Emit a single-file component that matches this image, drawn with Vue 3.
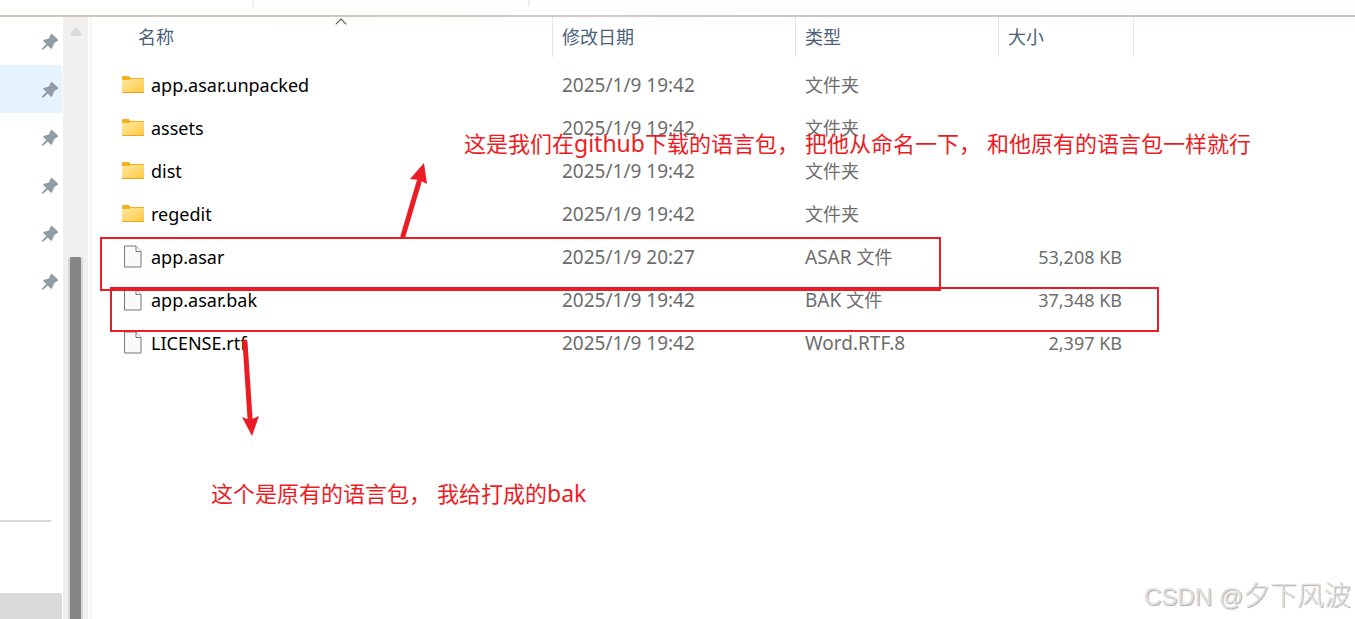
<script setup>
const pins = [
  { id: 1, active: false },
  { id: 2, active: true },
  { id: 3, active: false },
  { id: 4, active: false },
  { id: 5, active: false },
  { id: 6, active: false },
]

const files = [
  { name: 'app.asar.unpacked', date: '2025/1/9 19:42', kind: '', type: '文件夹', size: '', folder: true },
  { name: 'assets', date: '2025/1/9 19:42', kind: '', type: '文件夹', size: '', folder: true },
  { name: 'dist', date: '2025/1/9 19:42', kind: '', type: '文件夹', size: '', folder: true },
  { name: 'regedit', date: '2025/1/9 19:42', kind: '', type: '文件夹', size: '', folder: true },
  { name: 'app.asar', date: '2025/1/9 20:27', kind: 'ASAR ', type: '文件', size: '53,208 KB', folder: false },
  { name: 'app.asar.bak', date: '2025/1/9 19:42', kind: 'BAK ', type: '文件', size: '37,348 KB', folder: false },
  { name: 'LICENSE.rtf', date: '2025/1/9 19:42', kind: 'Word.RTF.8', type: '', size: '2,397 KB', folder: false },
]
</script>

<template>
  <div class="window">
    <div class="toolbar"><i class="tick first"></i><i class="tick second"></i></div>
    <div class="body">
      <nav class="sidebar">
        <button v-for="p in pins" :key="p.id" type="button" class="pin" :class="{ active: p.active }" aria-label="已固定">
          <svg width="17" height="16" viewBox="0 0 17 16">
            <path d="M8.6 0.4Q9.6-.3 10.5 0.5L15.7 5.2Q16.6 6.2 15.6 6.9L12.3 9.1 10 14.4 8.9 14.7 5.7 11.6 1.5 15.5 0 15.6 0.1 14.2 4.3 10.1 1.2 7 1.5 6 6.9 4.4Z" fill="#929ca3" />
          </svg>
        </button>
        <hr class="divider" />
        <div class="bottom-item"></div>
      </nav>
      <div class="scrollbar">
        <svg class="up" width="12" height="9" viewBox="0 0 12 9"><path d="M4.7 1Q6-.6 7.3 1L11.5 7Q12 9 10.5 9H1.5Q0 9 .5 7Z" fill="#dadada" /></svg>
        <div class="thumb"></div>
      </div>
      <main class="content">
        <table>
          <colgroup><col class="c-name" /><col class="c-date" /><col class="c-type" /><col class="c-size" /><col /></colgroup>
          <thead>
            <tr>
              <th class="name-head">
                <button type="button">名称</button>
                <svg class="sort" width="12" height="7" viewBox="0 0 12 7"><path d="M.7 6.3 6 1l5.3 5.3" fill="none" stroke="#555" stroke-width="1.1" /></svg>
              </th>
              <th><button type="button">修改日期</button></th>
              <th><button type="button">类型</button></th>
              <th><button type="button">大小</button></th>
              <td></td>
            </tr>
          </thead>
          <tbody>
            <tr v-for="f in files" :key="f.name">
              <td>
                <div class="file">
                  <svg v-if="f.folder" width="22" height="17" viewBox="0 0 22 17">
                    <defs>
                      <linearGradient id="folderFill" x1="0" y1="0" x2="1" y2="1">
                        <stop offset="0" stop-color="#ffe9a3" /><stop offset="1" stop-color="#ffc83d" />
                      </linearGradient>
                    </defs>
                    <path d="M0 1Q0 0 1 0H7L8.500 2H22V5H0Z" fill="#f6b01e" />
                    <path d="M0 4H7L9 3H22V16Q22 17 21 17H1Q0 17 0 16Z" fill="url(#folderFill)" />
                    <path d="M0 15.500Q0 17 1 17H21Q22 17 22 15.500V16H0Z" fill="#eaa51c" />
                  </svg>
                  <svg v-else class="doc" width="18" height="23" viewBox="0 0 18 23">
                    <path d="M.5 1H12L17 6.500V22H.5Z" fill="#fafafa" stroke="#777" />
                    <path d="M12 1V6.500H17" fill="#fff" stroke="#777" />
                  </svg>
                  <span>{{ f.name }}</span>
                </div>
              </td>
              <td class="muted">{{ f.date }}</td>
              <td class="muted">{{ f.kind }}<span class="han">{{ f.type }}</span></td>
              <td class="muted size">{{ f.size }}</td>
              <td></td>
            </tr>
          </tbody>
        </table>
      </main>
    </div>

    <div class="box box-new"></div>
    <div class="box box-old"></div>
    <svg class="arrow arrow-up" width="32" height="78" viewBox="0 0 32 78">
      <path d="M4 74 20 20" stroke="#ed1c24" stroke-width="5" stroke-linecap="round" />
      <path d="M25 1 28 22 20 18 11 17Z" fill="#ed1c24" />
    </svg>
    <svg class="arrow arrow-down" width="20" height="98" viewBox="0 0 20 98">
      <path d="M5 4 10 80" stroke="#ed1c24" stroke-width="5" stroke-linecap="round" />
      <path d="M12 98 2 79 10 82 19 78Z" fill="#ed1c24" />
    </svg>
    <p class="note note-new">
      <span>这是我们在<span class="latin">github</span>下载的语言包，</span><span>把他从命名一下，</span><span>和他原有的语言包一样就行</span>
    </p>
    <p class="note note-old">
      <span>这个是原有的语言包，</span><span>我给打成的<span class="latin">bak</span></span>
    </p>
    <div class="watermark">CSDN @<span class="author">夕下风波</span></div>
  </div>
</template>

<style>
body {
  margin: 0;
}
</style>

<style scoped>
.window {
  position: relative;
  display: flex;
  flex-direction: column;
  min-height: 100vh;
  overflow: hidden;
  background: #fff;
  font-family: "Noto Sans", "Noto Sans CJK SC", sans-serif;
  font-size: 19px;
  color: #000;
}
.toolbar {
  display: flex;
  height: 15px;
  border-bottom: 2px solid;
  border-image: linear-gradient(90deg, #d2c6b8, #d8c5c4 40%, #d2c0c2) 1;
}
.tick {
  width: 2px;
  height: 7px;
  background: #ececec;
}
.first {
  margin-left: 252px;
}
.second {
  margin-left: 274px;
}
.body {
  display: flex;
  flex: 1;
}
.sidebar {
  display: flex;
  flex-direction: column;
  width: 62px;
  margin-right: 1px;
}
button {
  border: 0;
  padding: 0;
  background: none;
  font: inherit;
  color: inherit;
}
.pin {
  display: flex;
  align-items: center;
  justify-content: flex-end;
  height: 48px;
  padding: 1px 3px 0 0;
  border-radius: 0 2px 2px 0;
}
.active {
  background: #e5f3ff;
}
.divider {
  width: 51px;
  height: 2px;
  margin: 215px 0 71px;
  border: 0;
  background: #d9d9d9;
}
.bottom-item {
  flex: 1;
  min-height: 26px;
  border-radius: 0 3px 0 0;
  background: #d9d9d9;
}
.scrollbar {
  display: flex;
  flex-direction: column;
  align-items: center;
  width: 25px;
  background: #f0f0f0;
}
.up {
  margin-top: 10px;
  flex: none;
}
.thumb {
  flex: 1;
  width: 11px;
  margin-top: 221px;
  border: solid #d6d6d6;
  border-width: 0 2px;
  border-radius: 3px 3px 0 0;
  background: #858585;
}
.content {
  flex: 1;
  min-width: 0;
  margin-left: 2px;
  border-left: 2px solid #f5f5f5;
}
table {
  width: 100%;
  table-layout: fixed;
  border-collapse: separate;
  border-spacing: 0;
}
.c-name {
  width: 461px;
}
.c-date {
  width: 243px;
}
.c-type {
  width: 203px;
}
.c-size {
  width: 135px;
}
th {
  position: relative;
  box-sizing: border-box;
  height: 40px;
  padding: 0 0 0 9px;
  border-right: 1px solid #e5e5e5;
  text-align: left;
  font-size: 18px;
  font-weight: 400;
  line-height: 40px;
  color: #4c607a;
}
.name-head {
  padding-left: 46px;
}
.sort {
  position: absolute;
  top: 1px;
  right: 205px;
}
tbody::before {
  content: "";
  display: block;
  height: 6px;
}
td {
  height: 43px;
  padding: 0 0 0 9px;
  line-height: 24px;
  white-space: nowrap;
}
thead td {
  height: auto;
  padding: 0;
}
td:first-child {
  padding-left: 30px;
}
.file {
  display: flex;
  align-items: center;
  gap: 7px;
  font-size: 18px;
}
.doc {
  margin: 0 2px;
}
.muted {
  color: #6d6d6d;
}
.han {
  font-size: 18px;
}
.size {
  padding: 0 12px 0 0;
  text-align: right;
  font-size: 18px;
}
.box {
  position: absolute;
  box-sizing: border-box;
  border: 2px solid #ed1c24;
}
.box-new {
  left: 100px;
  top: 237px;
  width: 841px;
  height: 54px;
}
.box-old {
  left: 110px;
  top: 287px;
  width: 1049px;
  height: 45px;
}
.arrow {
  position: absolute;
}
.arrow-up {
  left: 399px;
  top: 162px;
}
.arrow-down {
  left: 240px;
  top: 338px;
}
.note {
  position: absolute;
  display: flex;
  gap: 6px;
  margin: 0;
  font-size: 22px;
  line-height: 32px;
  white-space: nowrap;
  color: #ed1c24;
}
.latin {
  font-size: 23px;
}
.note-new {
  left: 464px;
  top: 127px;
}
.note-old {
  left: 211px;
  top: 477px;
}
.watermark {
  position: absolute;
  right: 4px;
  bottom: 4px;
  font-family: "Liberation Sans", "Noto Sans CJK SC", sans-serif;
  font-size: 24px;
  line-height: 36px;
  color: #e0e0e0;
  text-shadow: 1px 1px 1px #a8a8a8;
}
.author {
  font-size: 27px;
  font-weight: 300;
}
</style>
